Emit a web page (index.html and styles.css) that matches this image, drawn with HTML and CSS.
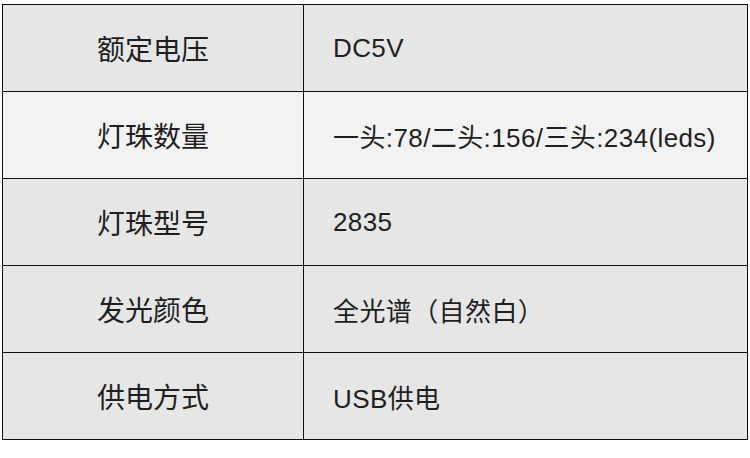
FILE: index.html
```html
<!DOCTYPE html>
<html lang="zh-CN">
<head>
<meta charset="utf-8">
<link rel="stylesheet" href="styles.css">
</head>
<body>
<table class="spec">
  <colgroup><col class="c-label"><col class="c-value"></colgroup>
  <tr class="r-dark"><td class="label">额定电压</td><td class="value">DC5V</td></tr>
  <tr class="r-light"><td class="label">灯珠数量</td><td class="value">一头:78/二头:156/三头:234(leds)</td></tr>
  <tr class="r-dark"><td class="label">灯珠型号</td><td class="value">2835</td></tr>
  <tr class="r-dark"><td class="label">发光颜色</td><td class="value">全光谱（自然白）</td></tr>
  <tr class="r-dark"><td class="label">供电方式</td><td class="value">USB供电</td></tr>
</table>
</body>
</html>
```
FILE: styles.css
```css
html, body {
  margin: 0;
  padding: 0;
  background: #ffffff;
}
body {
  padding: 4px 0 0 2px;
}
.spec {
  border-collapse: collapse;
  table-layout: fixed;
  width: 746px;
  color: #1f1f1f;
  font-family: "Liberation Sans", "Noto Sans CJK SC", sans-serif;
}
.c-label { width: 301px; }
.spec td {
  border: 1px solid #111111;
  height: 86px;
  padding: 0;
  vertical-align: middle;
}
.r-dark td { background: #e6e6e6; }
.r-light td { background: #f2f2f2; }
.label {
  text-align: center;
  font-size: 28px;
}
.value {
  padding-left: 29px !important;
  font-size: 26px;
  letter-spacing: 0.4px;
}
```
